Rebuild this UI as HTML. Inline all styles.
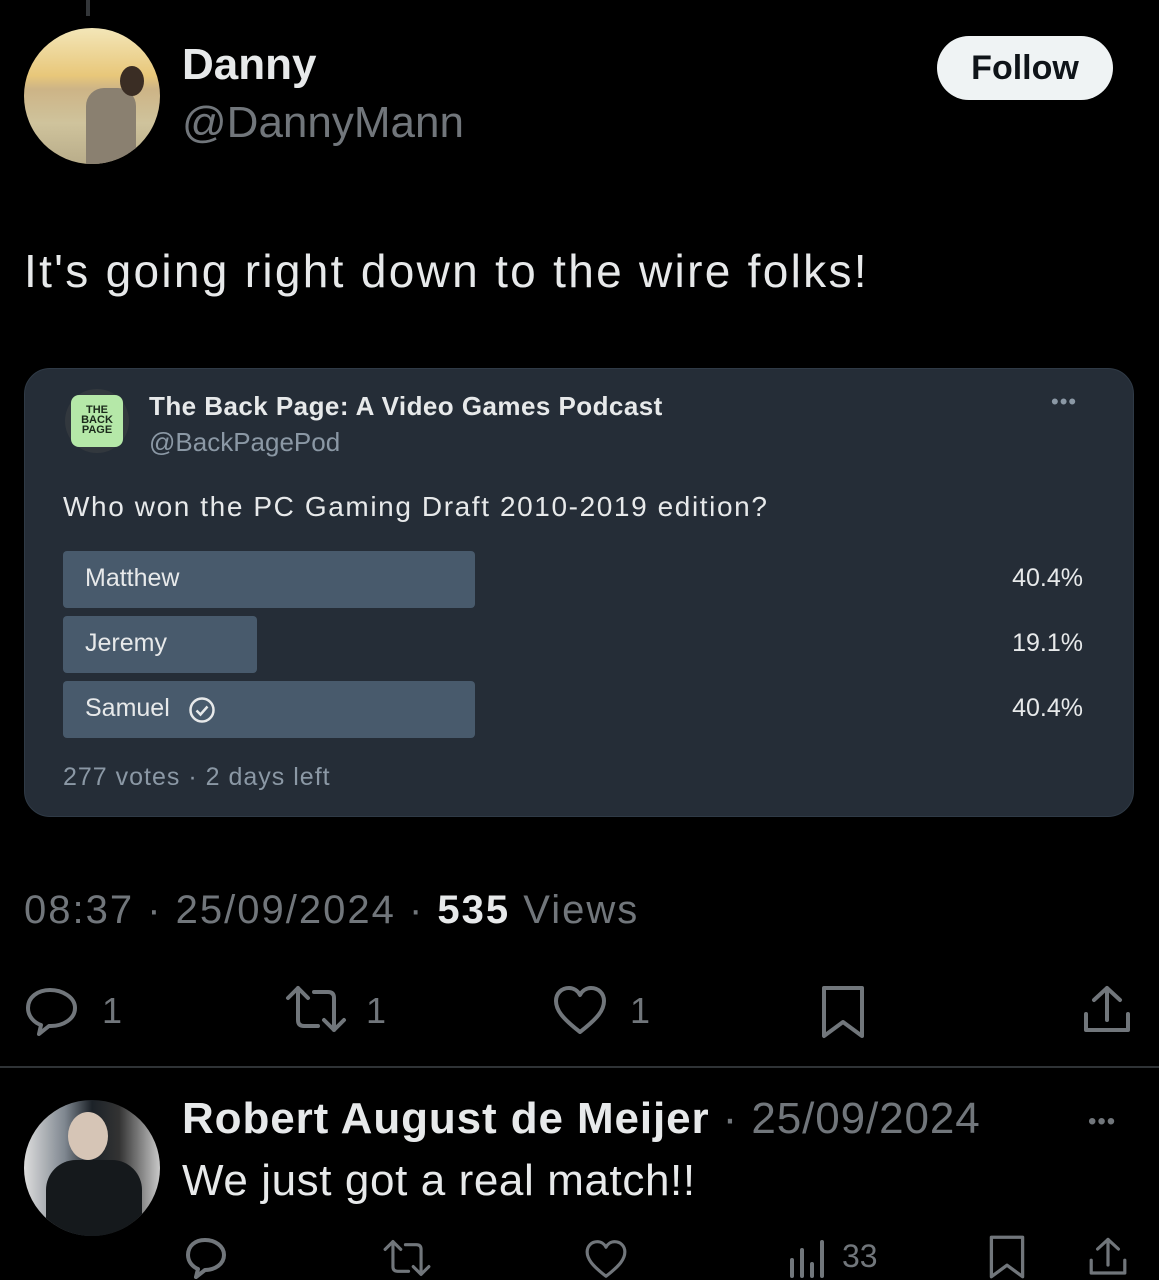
<!DOCTYPE html>
<html><head><meta charset="utf-8"><style>
*{margin:0;padding:0;box-sizing:border-box}
body{width:1159px;height:1280px;background:#000;overflow:hidden;position:relative;font-family:"Liberation Sans",sans-serif;color:#e7e9ea}
.a{position:absolute}
.ic{position:absolute;fill:none;stroke:#71767b;stroke-width:2;stroke-linejoin:round;stroke-linecap:round}
</style></head><body>
<div class="a" style="left:86px;top:0;width:4px;height:16px;background:#333639"></div>
<div class="a" style="left:24px;top:28px;width:136px;height:136px;border-radius:50%;background:linear-gradient(#f3e6b8 0%,#e8c77a 35%,#cdb486 45%,#cfc39c 70%,#b9ad8a 100%);overflow:hidden">
 <div class="a" style="left:62px;top:60px;width:50px;height:80px;background:#8a8070;border-radius:18px 18px 0 0"></div>
 <div class="a" style="left:96px;top:38px;width:24px;height:30px;background:#3a2d24;border-radius:50%"></div>
</div>
<div class="a" style="left:182px;top:40px;font-size:44px;font-weight:bold;color:#e7e9ea">Danny</div>
<div class="a" style="left:182px;top:98px;font-size:44px;color:#71767b">@DannyMann</div>
<div class="a" style="left:937px;top:36px;width:176px;height:64px;border-radius:32px;background:#eff3f4;color:#0f1419;font-weight:bold;font-size:34px;text-align:center;line-height:64px">Follow</div>
<div class="a" style="left:24px;top:244px;font-size:46px;color:#e7e9ea;letter-spacing:2.3px">It's going right down to the wire folks!</div>

<div class="a" style="left:24px;top:368px;width:1110px;height:449px;border-radius:26px;background:#252d37;border:1px solid #2f3a46">
 <div class="a" style="left:40px;top:20px;width:64px;height:64px;border-radius:50%;background:#32383e"></div>
 <div class="a" style="left:46px;top:26px;width:52px;height:52px;border-radius:8px;background:#b5e8a8;font-size:11px;font-weight:bold;color:#1b2a1b;line-height:10px;text-align:center;padding-top:10px">THE<br>BACK<br>PAGE</div>
 <div class="a" style="left:124px;top:22px;font-size:26px;font-weight:bold;color:#e7e9ea;letter-spacing:0.45px">The Back Page: A Video Games Podcast</div>
 <div class="a" style="left:124px;top:58px;font-size:26px;color:#8b98a5">@BackPagePod</div>
 <div class="a" style="left:1026px;top:20px;font-size:22px;color:#8b98a5;letter-spacing:1px">•••</div>
 <div class="a" style="left:38px;top:122px;font-size:28px;color:#e7e9ea;letter-spacing:1.6px">Who won the PC Gaming Draft 2010-2019 edition?</div>
 <div class="a" style="left:38px;top:182px;width:412px;height:57px;border-radius:4px;background:#485a6c"></div>
 <div class="a" style="left:38px;top:247px;width:194px;height:57px;border-radius:4px;background:#485a6c"></div>
 <div class="a" style="left:38px;top:312px;width:412px;height:57px;border-radius:4px;background:#485a6c"></div>
 <div class="a" style="left:60px;top:195px;font-size:25px;color:#e7e9ea">Matthew</div>
 <div class="a" style="left:60px;top:260px;font-size:25px;color:#e7e9ea">Jeremy</div>
 <div class="a" style="left:60px;top:325px;font-size:25px;color:#e7e9ea">Samuel</div>
 <svg class="a" style="left:162px;top:326px" width="30" height="30" viewBox="0 0 30 30"><circle cx="15" cy="15" r="11.5" fill="none" stroke="#e7e9ea" stroke-width="2.5"/><path d="M9.5 15.5l4 4 7-8" fill="none" stroke="#e7e9ea" stroke-width="2.5"/></svg>
 <div class="a" style="right:50px;top:195px;font-size:25px;color:#e7e9ea">40.4%</div>
 <div class="a" style="right:50px;top:260px;font-size:25px;color:#e7e9ea">19.1%</div>
 <div class="a" style="right:50px;top:325px;font-size:25px;color:#e7e9ea">40.4%</div>
 <div class="a" style="left:38px;top:394px;font-size:25px;color:#8b98a5;letter-spacing:1px">277 votes · 2 days left</div>
</div>

<div class="a" style="left:24px;top:888px;font-size:40px;color:#71767b;letter-spacing:2px"><span>08:37 · 25/09/2024 · </span><b style="color:#e7e9ea">535</b> Views</div>

<svg class="ic" style="left:24px;top:984px;stroke-width:4" width="56" height="56" viewBox="0 0 56 56"><path d="M26 6C14 6 4 13 4 24c0 9 7 15 13 17l-2 9 10-8h2c12 0 24-7 24-18S38 6 26 6z"/></svg>
<div class="a" style="left:102px;top:990px;font-size:36px;color:#71767b">1</div>
<svg class="ic" style="left:284px;top:984px;stroke-width:4" width="64" height="50" viewBox="0 0 64 50"><path d="M4 14L14 4 24 14M14 4v32c0 4 2 6 6 6h14M60 36L50 46 40 36M50 46V14c0-4-2-6-6-6H30"/></svg>
<div class="a" style="left:366px;top:990px;font-size:36px;color:#71767b">1</div>
<svg class="ic" style="left:552px;top:984px;stroke-width:4" width="56" height="52" viewBox="0 0 56 52"><path d="M28 48C10 34 4 26 4 17 4 9 10 4 17 4c5 0 9 3 11 7 2-4 6-7 11-7 7 0 13 5 13 13 0 9-6 17-24 31z"/></svg>
<div class="a" style="left:630px;top:990px;font-size:36px;color:#71767b">1</div>
<svg class="ic" style="left:820px;top:984px;stroke-width:4" width="46" height="56" viewBox="0 0 46 56"><path d="M4 4h38v48L23 38 4 52z"/></svg>
<svg class="ic" style="left:1082px;top:984px;stroke-width:4" width="50" height="52" viewBox="0 0 50 52"><path d="M25 4v32M12 16L25 4l13 12M4 30v16h42V30"/></svg>

<div class="a" style="left:0;top:1066px;width:1159px;height:2px;background:#2f3336"></div>

<div class="a" style="left:24px;top:1100px;width:136px;height:136px;border-radius:50%;background:linear-gradient(90deg,#ddd,#7f8790 30%,#1c2228 50%,#333 70%,#c9c9c9);overflow:hidden">
 <div class="a" style="left:44px;top:12px;width:40px;height:48px;border-radius:50%;background:#d6c5b6"></div>
 <div class="a" style="left:22px;top:60px;width:96px;height:90px;background:#15191c;border-radius:30px 30px 0 0"></div>
</div>
<div class="a" style="left:182px;top:1094px;font-size:44px;color:#e7e9ea;letter-spacing:0.9px;white-space:nowrap"><b>Robert August de Meijer</b><span style="color:#71767b;font-weight:normal"> · 25/09/2024</span></div>
<div class="a" style="left:1088px;top:1108px;font-size:24px;color:#71767b;letter-spacing:1px">•••</div>
<div class="a" style="left:182px;top:1156px;font-size:44px;color:#e7e9ea;letter-spacing:0.6px">We just got a real match!!</div>

<svg class="ic" style="left:184px;top:1236px;stroke-width:4" width="44" height="44" viewBox="0 0 44 44"><path d="M21 4C11 4 4 10 4 19c0 7 5 12 10 14l-2 8 9-7c10 0 19-6 19-15S31 4 21 4z"/></svg>
<svg class="ic" style="left:382px;top:1238px;stroke-width:4" width="50" height="40" viewBox="0 0 64 50"><path d="M4 14L14 4 24 14M14 4v32c0 4 2 6 6 6h14M60 36L50 46 40 36M50 46V14c0-4-2-6-6-6H30"/></svg>
<svg class="ic" style="left:584px;top:1238px;stroke-width:4" width="44" height="42" viewBox="0 0 56 52"><path d="M28 48C10 34 4 26 4 17 4 9 10 4 17 4c5 0 9 3 11 7 2-4 6-7 11-7 7 0 13 5 13 13 0 9-6 17-24 31z"/></svg>
<svg class="ic" style="left:788px;top:1238px;stroke-width:4" width="40" height="40" viewBox="0 0 40 40"><path d="M4 38V22M14 38V12M24 38V26M34 38V4"/></svg>
<div class="a" style="left:842px;top:1238px;font-size:32px;color:#71767b">33</div>
<svg class="ic" style="left:988px;top:1234px;stroke-width:4" width="38" height="46" viewBox="0 0 46 56"><path d="M4 4h38v48L23 38 4 52z"/></svg>
<svg class="ic" style="left:1088px;top:1236px;stroke-width:4" width="40" height="42" viewBox="0 0 50 52"><path d="M25 4v32M12 16L25 4l13 12M4 30v16h42V30"/></svg>
</body></html>
